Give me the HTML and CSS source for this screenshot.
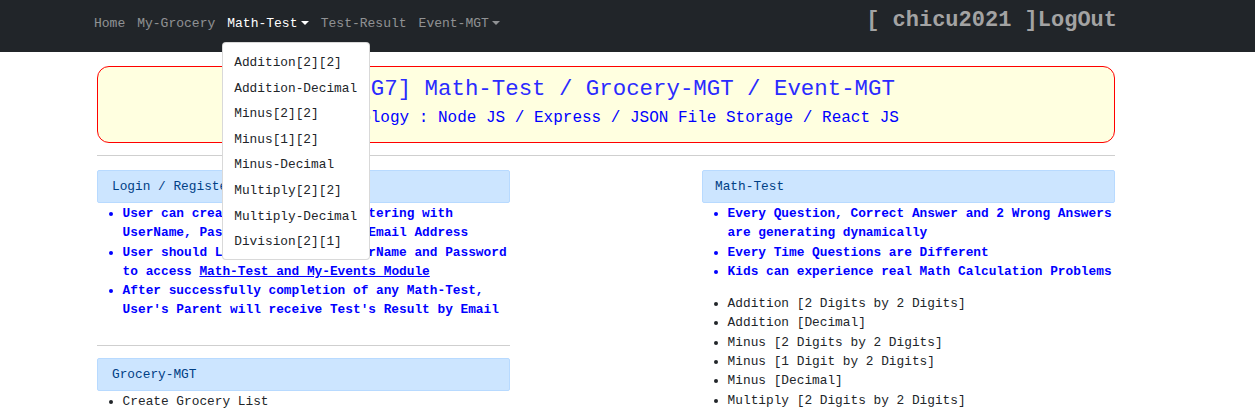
FILE: index.html
```html
<!DOCTYPE html>
<html>
<head>
<meta charset="utf-8">
<link rel="stylesheet" href="styles.css">
</head>
<body>
<nav class="navbar">
  <div class="nav-inner">
    <ul class="nav-links">
      <li><a class="nav-link">Home</a></li>
      <li><a class="nav-link">My-Grocery</a></li>
      <li class="has-dropdown">
        <a class="nav-link active">Math-Test<span class="caret"></span></a>
        <div class="dropdown">
          <a class="dd-item">Addition[2][2]</a>
          <a class="dd-item">Addition-Decimal</a>
          <a class="dd-item">Minus[2][2]</a>
          <a class="dd-item">Minus[1][2]</a>
          <a class="dd-item">Minus-Decimal</a>
          <a class="dd-item">Multiply[2][2]</a>
          <a class="dd-item">Multiply-Decimal</a>
          <a class="dd-item">Division[2][1]</a>
        </div>
      </li>
      <li><a class="nav-link">Test-Result</a></li>
      <li><a class="nav-link">Event-MGT<span class="caret"></span></a></li>
    </ul>
    <div class="user">[ chicu2021 ]LogOut</div>
  </div>
</nav>

<main class="container">
  <div class="banner">
    <div class="banner-title">[KidG7] Math-Test / Grocery-MGT / Event-MGT</div>
    <div class="banner-sub">Technology : Node JS / Express / JSON File Storage / React JS</div>
  </div>
  <hr class="rule">

  <div class="columns">
    <section class="col">
      <div class="card-head">Login / Register</div>
      <ul class="list blue">
        <li>User can create Account by registering with UserName, Password and Parent's Email Address</li>
        <li>User should Login with valid UserName and Password to access <a class="link">Math-Test and My-Events Module</a></li>
        <li>After successfully completion of any Math-Test, User's Parent will receive Test's Result by Email</li>
      </ul>
      <hr class="rule rule-col">
      <div class="card-head">Grocery-MGT</div>
      <ul class="list plain">
        <li>Create Grocery List</li>
      </ul>
    </section>

    <section class="col col-right">
      <div class="card-head">Math-Test</div>
      <ul class="list blue">
        <li>Every Question, Correct Answer and 2 Wrong Answers are generating dynamically</li>
        <li>Every Time Questions are Different</li>
        <li>Kids can experience real Math Calculation Problems</li>
      </ul>
      <ul class="list plain second">
        <li>Addition [2 Digits by 2 Digits]</li>
        <li>Addition [Decimal]</li>
        <li>Minus [2 Digits by 2 Digits]</li>
        <li>Minus [1 Digit by 2 Digits]</li>
        <li>Minus [Decimal]</li>
        <li>Multiply [2 Digits by 2 Digits]</li>
      </ul>
    </section>
  </div>
</main>
</body>
</html>
```

FILE: styles.css
```css
* { box-sizing: border-box; }

body {
  margin: 0;
  font-family: "Liberation Mono", "Courier New", monospace;
  font-size: 12.8px;
  color: #212529;
  background: #fff;
  overflow: hidden;
}

.navbar {
  background: #212529;
  height: 52px;
}

.nav-inner {
  display: flex;
  justify-content: space-between;
  align-items: flex-start;
  margin-left: 88px;
  width: 1029px;
}

.nav-links {
  display: flex;
  list-style: none;
  margin: 0;
  padding: 0;
}

.nav-links li { position: relative; }

.nav-link {
  display: block;
  padding: 14px 6px 0;
  line-height: 19px;
  font-size: 13px;
  color: rgba(255, 255, 255, 0.5);
}

.nav-link.active { color: #fff; }

.caret {
  display: inline-block;
  margin-left: 3.3px;
  vertical-align: 2px;
  border-top: 4px solid;
  border-left: 4px solid transparent;
  border-right: 4px solid transparent;
}

.dropdown {
  position: absolute;
  top: 42px;
  left: 1px;
  width: 148px;
  height: 218px;
  background: #fff;
  border: 1px solid rgba(0, 0, 0, 0.15);
  border-radius: 4px;
  padding: 7px 0 0;
  z-index: 10;
}

.dd-item {
  display: block;
  padding: 4px 11px;
  line-height: 17.6px;
  font-size: 12.8px;
  color: #212529;
  white-space: nowrap;
}

.user {
  padding-top: 8px;
  font-size: 22px;
  line-height: 26px;
  font-weight: bold;
  color: #a3a3a3;
  white-space: nowrap;
}

.container {
  margin-left: 97px;
  width: 1018px;
  padding-top: 14px;
}

.banner {
  height: 77px;
  border: 1px solid #ff0000;
  border-radius: 12px;
  background: #ffffe0;
  text-align: center;
  padding-top: 9px;
}

.banner-title {
  font-size: 22.4px;
  line-height: 26px;
  color: #2b2bff;
}

.banner-sub {
  margin-top: 4px;
  font-size: 16px;
  line-height: 24px;
  color: #0000ff;
}

.rule {
  border: 0;
  border-top: 1px solid #cfcfcf;
  margin: 12px 0 14px;
}

.columns {
  display: grid;
  grid-template-columns: 413px 1fr 413px;
}

.columns .col-right { grid-column: 3; }

.card-head {
  height: 33px;
  background: #cce5ff;
  border: 1px solid #b8daff;
  border-radius: 2px;
  color: #004085;
  padding: 0 14px;
  line-height: 31px;
}

.col-right .card-head { padding-left: 12px; }

.list {
  margin: 0;
  padding-top: 1px;
  padding-left: 25.6px;
  line-height: 19.3px;
}

.list.blue {
  color: #0000ff;
  font-weight: bold;
}

.list.plain { color: #212529; }

.list.second { margin-top: 12px; }

.link {
  color: #0000ff;
  text-decoration: underline;
}

.rule-col { margin: 25px 0 12px; }
```
